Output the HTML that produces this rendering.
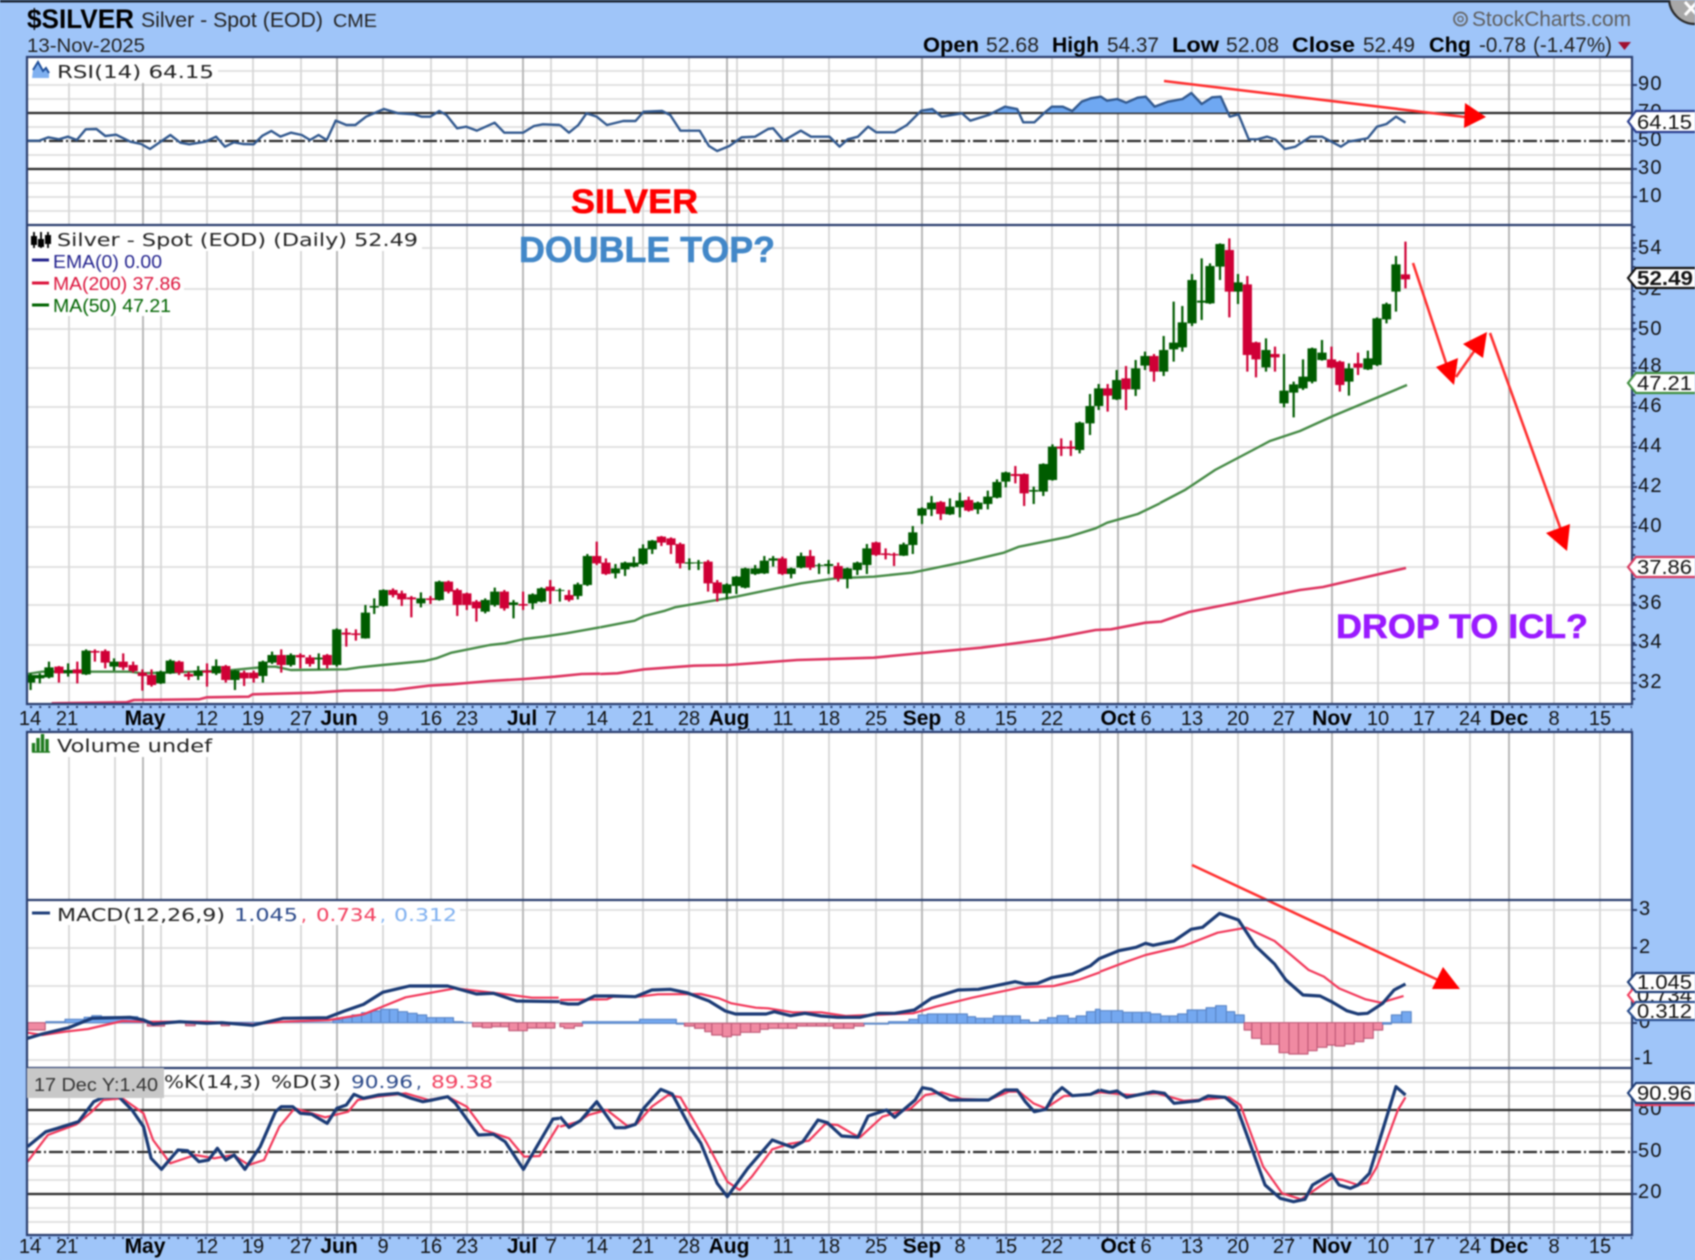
<!DOCTYPE html>
<html><head><meta charset="utf-8"><title>$SILVER</title>
<style>
html,body{margin:0;padding:0;background:#9fc5f9;width:1695px;height:1260px;overflow:hidden}
svg{display:block;filter:blur(.85px)}
text{font-family:"Liberation Sans",sans-serif;fill:#111}
.b{font-weight:bold;fill:#000}
.dv{font-family:"DejaVu Sans","Liberation Sans",sans-serif;font-size:18px;fill:#222}
.ctr text{text-anchor:middle;font-size:20px;fill:#111}
.ctr .m{font-weight:bold;fill:#000;font-size:21px}
.yl text{font-size:20px;letter-spacing:1.2px;fill:#111}
.z path,.z polygon{vector-effect:non-scaling-stroke;stroke-linejoin:round}
.w{fill:none;stroke-width:2.2}
.bd{fill:none;stroke-width:9.2}
.g{stroke:#005c00}.r{stroke:#cf0036}
.n{fill:none;stroke:#1a3a75;stroke-width:3.2}
.s{fill:none;stroke:#f2385a;stroke-width:2.2}
.rsi{fill:none;stroke:#32598f;stroke-width:2.4}
.m50{fill:none;stroke:#458a45;stroke-width:2.4}
.m200{fill:none;stroke:#dd3460;stroke-width:2.6}
.hb{fill:#74a8f0;stroke:#5a86c8;stroke-width:1.2}
.hp{fill:#f08aa2;stroke:#c05a78;stroke-width:1.2}
.hbl{fill:none;stroke:#5a86c8;stroke-width:1.2}
.hpl{fill:none;stroke:#c05a78;stroke-width:1.2}
.ar{fill:none;stroke:#ff3030;stroke-width:2.6}
.tt{fill:#ff0000}
.tg{fill:#fff;stroke-width:2.2}
.tl{font-size:20px;fill:#111}
</style></head>
<body>
<svg width="1695" height="1260" viewBox="0 0 1695 1260" xmlns="http://www.w3.org/2000/svg">
<rect width="1695" height="1260" fill="#9fc5f9"/>
<rect width="1695" height="2.5" fill="#1a2433"/>
<!-- panels -->
<rect x="27" y="57" width="1605" height="647" fill="#fff"/>
<rect x="27" y="732" width="1605" height="503" fill="#fff"/>
<!-- horizontal grid -->
<path fill="none" stroke="#dedede" stroke-width="1.8" d="M27 71H1632M27 85H1632M27 99H1632M27 127H1632M27 155H1632M27 183H1632M27 197H1632M27 211H1632
M27 248H1632M27 289H1632M27 329H1632M27 368H1632M27 407H1632M27 447H1632M27 487H1632M27 527H1632M27 567H1632M27 605H1632M27 645H1632M27 683H1632
M27 910H1632M27 948H1632M27 986H1632M27 1023H1632M27 1060H1632
M27 1082H1632M27 1096H1632M27 1124H1632M27 1138H1632M27 1166H1632M27 1180H1632M27 1208H1632M27 1222H1632"/>
<!-- vertical grid -->
<path fill="none" stroke="#d6d6d6" stroke-width="1.8" d="M69 57V704M115 57V704M161 57V704M207 57V704M253 57V704M301 57V704M383 57V704M431 57V704M467 57V704M551 57V704M597 57V704M643 57V704M689 57V704M737 57V704M783 57V704M829 57V704M876 57V704M960 57V704M1006 57V704M1052 57V704M1100 57V704M1146 57V704M1192 57V704M1238 57V704M1284 57V704M1378 57V704M1424 57V704M1470 57V704M1554 57V704M1600 57V704
M69 732V1235M115 732V1235M161 732V1235M207 732V1235M253 732V1235M301 732V1235M383 732V1235M431 732V1235M467 732V1235M551 732V1235M597 732V1235M643 732V1235M689 732V1235M737 732V1235M783 732V1235M829 732V1235M876 732V1235M960 732V1235M1006 732V1235M1052 732V1235M1100 732V1235M1146 732V1235M1192 732V1235M1238 732V1235M1284 732V1235M1378 732V1235M1424 732V1235M1470 732V1235M1554 732V1235M1600 732V1235"/>
<path fill="none" stroke="#b8b8b8" stroke-width="2" d="M143 57V704M337 57V704M523 57V704M727 57V704M922 57V704M1118 57V704M1332 57V704M1509 57V704
M143 732V1235M337 732V1235M523 732V1235M727 732V1235M922 732V1235M1118 732V1235M1332 732V1235M1509 732V1235"/>
<!-- legend backgrounds -->
<rect x="28" y="58" width="190" height="25" fill="#fff"/>
<rect x="28" y="226" width="394" height="25" fill="#fff"/>
<rect x="28" y="251" width="156" height="65" fill="#fff"/>
<rect x="28" y="733" width="188" height="24" fill="#fff"/>
<rect x="28" y="901" width="432" height="24" fill="#fff"/>
<rect x="164" y="1069" width="332" height="24" fill="#fff"/>
<!-- reference lines -->
<path fill="none" stroke="#2a2a2a" stroke-width="2.2" d="M27 113H1632M27 169H1632M27 1110H1632M27 1194H1632"/>
<path fill="none" stroke="#2a2a2a" stroke-width="2.2" stroke-dasharray="14 3 2 3" d="M27 141H1632M27 1152H1632"/>

<!-- RSI fill + line -->
<g class="z" transform="translate(560,60) scale(.40816,.33333)">
<path fill="#6fa8f2" d="M1190 158L1205 140 1232 140 1255 153 1278 125 1300 115 1325 110 1340 122 1365 117 1387 128 1415 113 1435 110 1457 140 1490 125 1525 117 1548 98V158ZM885 158L912 147 925 158ZM1070 158L1090 140 1120 147 1125 158Z"/>
<path class="rsi" d="M0 195L22 218 45 195 65 160 90 170 115 195 155 183 185 183 205 155 250 153 270 165 295 212 342 212 365 258 385 273 415 258 445 232 478 230 510 207 522 205 548 242 590 212 615 230 660 230 685 260 705 238 730 230 755 200 775 217 820 217 850 195 885 152 912 147 935 170 985 160 1005 182 1050 165 1090 140 1120 147 1135 187 1162 187 1190 155 1205 140 1232 140 1255 153 1278 125 1300 115 1325 110 1340 122 1365 117 1387 128 1415 113 1435 110 1457 140 1490 125 1525 117 1548 98"/>
</g>
<g class="z" transform="translate(0,0) scale(.35714,.33333)">
<path class="rsi" d="M75 422L110 422 135 412 165 418 190 410 215 420 240 388 270 387 295 408 325 404 365 425 395 432 420 447 450 425 477 405 505 428 530 433 575 425 605 410 630 440 655 427 680 432 710 433 735 407 760 393 785 410 815 398 845 405 868 420 892 405 915 420 940 362 970 375 995 375 1025 350 1075 327 1115 340 1160 343 1180 350 1205 350 1230 333 1250 345 1280 385 1305 380 1335 392 1385 368 1412 398 1465 398 1495 378 1520 373 1568 375"/>
</g>
<g class="z" transform="translate(1100,0) scale(.37946,.33333)">
<path fill="#6fa8f2" d="M240 278L268 312 295 292 318 290 335 338H240Z"/>
<path class="rsi" d="M240 278L268 312 295 292 318 290 342 350 365 343 392 418 415 418 440 410 462 418 487 447 515 440 555 410 585 410 635 440 655 425 705 415 730 380 755 372 780 350 805 368"/>
</g>

<!-- MAs -->
<g class="z" transform="translate(0,540) scale(.38265,.33333)">
<path class="m50" d="M72 402L110 395 340 395 370 400 590 392 700 380 720 380 760 390 905 388 940 382 1000 375 1110 363 1140 355 1180 338 1280 315 1320 310 1370 297 1420 290 1480 280 1568 262"/>
<path class="m200" d="M135 490L330 487 350 480 520 478 540 472 650 470 660 463 820 458 900 452 1030 450 1120 437 1180 433 1280 423 1370 417 1450 410 1520 402 1568 401"/>
</g>
<g class="z" transform="translate(560,400) scale(.38265,.33333)">
<path class="m50" d="M105 682L195 662 220 648 275 632 300 622 460 590 630 550 720 535 820 530 920 518 1060 485 1160 458 1200 440 1330 410 1400 385 1430 368 1510 342 1568 310"/>
<path class="m200" d="M105 822L150 820 220 808 350 797 440 795 620 780 820 773 920 762 1100 743 1270 718 1400 690 1440 688 1530 668 1568 665"/>
</g>
<path class="m50" d="M1160 503L1185 490 1215 470 1253 450 1270 441 1300 431 1333 416 1407 385"/>
<path class="m200" d="M1160 622L1189 612 1250 600 1300 590 1323 587 1406 568"/>

<!-- candles: left -->
<g class="z" transform="translate(0,540) scale(.38265,.33333)">
<path class="w g" d="M80 400V450M104 400V430M128 365V415M178 370V410M225 328V405M298 355V392M420 392V432M445 358V402M518 378V420M565 358V405M614 390V450M687 362V428M711 335V372M760 340V380M833 340V388M880 265V380M955 195V296M978 175V222M1002 148V200M1100 157V202M1148 122V182M1268 175V220M1293 143V200M1342 180V235M1392 160V208M1415 142V187M1463 145V185M1510 128V178M1535 42V138"/>
<path class="w r" d="M154 378V428M202 365V430M248 328V365M275 328V385M322 340V390M348 365V398M372 388V452M396 388V440M468 362V405M493 395V420M541 370V440M590 375V428M638 392V438M663 392V428M735 328V398M785 340V385M810 345V380M855 342V385M905 265V320M930 268V302M1027 145V172M1050 152V198M1075 168V232M1125 168V192M1172 122V160M1195 145V228M1220 158V210M1245 180V245M1318 150V212M1367 155V210M1438 120V192M1487 150V185"/>
<path class="bd g" d="M80 405V428M104 405V415M128 382V412M178 390V400M225 332V403M298 365V380M420 395V430M445 362V400M518 392V408M565 378V400M614 392V420M687 365V408M711 345V368M760 345V375M833 353V358M880 268V375M955 218V295M978 198V203M1002 150V198M1100 175V190M1148 125V180M1268 180V215M1293 155V195M1342 187V195M1392 163V190M1415 145V185M1463 150V153M1510 133V168M1535 48V135"/>
<path class="bd r" d="M154 380V400M202 388V400M248 333V338M275 333V368M322 365V382M348 375V393M372 398V408M396 405V435M468 365V398M493 402V410M541 392V398M590 378V420M638 398V415M663 398V415M735 345V375M785 345V352M810 352V372M855 345V375M905 278V284M930 280V285M1027 150V165M1050 160V178M1075 172V178M1125 175V180M1172 125V155M1195 150V195M1220 160V195M1245 185V205M1318 155V205M1367 192V197M1438 140V153M1487 165V180"/>
</g>
<!-- candles: middle -->
<g class="z" transform="translate(560,400) scale(.38265,.33333)">
<path class="w g" d="M145 492V535M170 485V528M193 470V502M217 433V495M241 420V462M338 475V510M362 480V510M436 550V598M461 528V582M484 503V565M510 495V525M534 468V522M557 468V500M604 503V535M630 458V505M677 490V522M702 480V522M751 503V565M777 485V525M802 432V522M898 428V468M922 378V462M946 322V372M971 288V348M1019 295V345M1045 278V352M1092 305V342M1118 272V328M1142 238V295M1165 215V262M1238 260V312M1263 190V288M1287 133V242M1358 65V160"/>
<path class="w r" d="M96 425V495M120 475V525M265 408V438M290 412V462M314 428V505M387 480V575M411 540V605M581 470V525M654 450V510M727 488V545M826 425V468M851 445V478M873 458V498M995 303V360M1068 290V335M1190 198V250M1213 220V318M1310 115V168M1335 122V168"/>
<path class="bd g" d="M145 505V520M170 488V508M193 488V500M217 445V492M241 422V448M338 487V491M362 487V490M436 553V580M461 530V558M484 505V563M510 505V522M534 482V520M557 475V482M604 505V522M630 468V503M677 495V498M702 492V498M751 505V537M777 488V510M802 445V495M898 433V467M922 397V435M946 325V347M971 308V328M1019 320V343M1045 302V322M1092 308V328M1118 290V312M1142 246V293M1165 217V245M1238 270V275M1263 192V275M1287 140V240M1358 68V150"/>
<path class="bd r" d="M96 468V490M120 488V522M265 410V428M290 415V435M314 432V490M387 485V550M411 547V580M581 475V522M654 468V503M727 498V535M826 427V465M851 460V465M873 462V466M995 306V342M1068 300V332M1190 222V228M1213 222V280M1310 140V146M1335 140V146"/>
</g>
<!-- candles: right 1 -->
<g class="z" transform="translate(1000,230) scale(.33333,.33333)">
<path class="w g" d="M270 492V615M296 462V540M350 420V510M407 390V498M435 365V420M491 318V438M521 215V395M547 228V365M576 132V288M605 85V270M630 100V222M660 40V150M714 132V222M798 325V425M852 372V532M881 455V562"/>
<path class="w r" d="M323 462V545M378 408V540M462 372V455M688 25V262M742 138V425M768 335V442M825 350V425"/>
<path class="bd g" d="M270 528V580M296 475V528M350 450V508M407 415V478M435 378V407M491 360V425M521 338V358M547 277V352M576 150V280M605 212V218M630 108V220M660 42V110M714 157V185M798 360V412M852 482V520M881 463V488"/>
<path class="bd r" d="M323 475V497M378 445V478M462 378V425M688 60V185M742 163V375M768 337V388M825 372V382"/>
</g>
<!-- candles: right 2 -->
<g class="z" transform="translate(1100,0) scale(.37946,.33333)">
<path class="w g" d="M535 1078V1170M559 1043V1150M585 1020V1082M656 1090V1187M706 1052V1110M730 952V1098M755 908V970M780 768V935"/>
<path class="w r" d="M610 1040V1105M632 1082V1175M680 1058V1125M805 725V865"/>
<path class="bd g" d="M535 1130V1165M559 1045V1145M585 1058V1080M656 1105V1145M706 1075V1108M730 955V1095M755 912V958M780 793V875"/>
<path class="bd r" d="M610 1078V1103M632 1085V1155M680 1090V1103M805 823V838"/>
</g>

<!-- histogram + MACD -->
<g class="z" transform="translate(0,880) scale(.38265,.33333)">
<path class="hp" d="M72 428V450H118V428Z"/>
<path class="hb" d="M120 428V425H170V418H220V412H240V407H265V410H360V425H385V428Z"/>
<path class="hp" d="M385 428V438H430V428ZM485 428V437H510V428ZM578 428V437H600V428Z"/>
<path class="hb" d="M870 428V420H895V412H920V405H945V398H970V393H995V388H1040V395H1065V400H1090V405H1115V413H1185V425H1210V428Z"/>
<path class="hbl" d="M895 428V412M920 428V405M945 428V398M970 428V393M995 428V388M1018 428V388M1040 428V395M1065 428V400M1090 428V405M1115 428V413M1140 428V413M1162 428V413M600 427H870M1210 428H1235"/>
<path class="hp" d="M1235 428V440H1260V443H1285V440H1330V452H1378V444H1450V428Z"/>
<path class="hpl" d="M1260 428V443M1285 428V440M1308 428V440M1330 428V452M1354 428V452M1378 428V444M1402 428V444M1426 428V444"/>
<path class="s" d="M72 458L110 465 170 455 230 447 320 423 380 425 540 425 660 433 740 425 860 420 950 403 1060 352 1190 325 1280 337 1390 353 1460 353"/>
<path class="n" d="M72 475L110 462 180 443 240 415 340 412 375 420 400 432 470 425 540 430 580 428 660 436 740 415 855 413 900 393 950 373 1000 337 1070 318 1170 318 1245 342 1290 340 1350 363 1463 365"/>
</g>
<g class="z" transform="translate(560,900) scale(.40816,.33333)">
<path class="hp" d="M0 370V380H10V385H35V378H55V370Z"/>
<path class="hb" d="M55 370V365H195V358H285V372H305V370Z"/>
<path class="hp" d="M305 370V378H330V385H355V395H372V405H398V410H420V405H442V397H490V388H510V385H580V378H670V385H720V378H745V370Z"/>
<path class="hpl" d="M330 370V385M355 370V395M372 370V405M398 370V410M420 370V405M442 370V397M467 370V397M490 370V388M510 370V385M535 370V385M558 370V385M580 370V378M605 370V378M628 370V378M650 370V378M670 370V385M695 370V385M720 370V378"/>
<path class="hb" d="M745 370V372H805V365H855V358H878V345H900V342H998V350H1018V355H1062V348H1128V360H1150V367H1175V360H1195V353H1218V347H1245V355H1265V348H1290V335H1312V328H1323V370Z"/>
<path class="hbl" d="M878 370V345M900 370V342M925 370V342M948 370V342M972 370V342M998 370V350M1018 370V355M1040 370V355M1062 370V348M1085 370V348M1108 370V348M1128 370V360M1195 370V353M1218 370V347M1245 370V355M1265 370V348M1290 370V335M1312 370V328"/>
<path class="s" d="M0 300L115 298 130 290 190 290 240 283 345 282 390 295 420 310 480 323 510 325 570 337 640 337 700 348 760 345 865 340 920 320 1010 293 1130 262 1210 258 1270 240 1323 217"/>
<path class="n" d="M0 308L20 312 45 312 85 288 130 288 185 290 225 270 270 268 310 278 365 303 405 333 430 342 505 342 525 335 565 347 600 340 640 348 680 352 735 352 780 340 820 340 868 330 910 295 975 270 1025 268 1115 245 1140 252 1170 250 1205 233 1255 222 1300 197 1323 174"/>
</g>
<g class="z" transform="translate(1100,860) scale(.37946,.33333)">
<path class="hb" d="M0 488V452H60V457H133V462H160V468H205V462H230V450H280V443H305V437H333V455H355V465H380V488Z"/>
<path class="hbl" d="M30 488V452M60 488V457M85 488V457M110 488V457M133 488V462M160 488V468M183 488V468M205 488V462M230 488V450M256 488V450M280 488V443M305 488V437M333 488V455M355 488V465"/>
<path class="hp" d="M380 488V510H400V535H425V553H472V578H498V582H548V572H572V562H598V555H620V558H645V552H670V545H695V535H720V510H745V488Z"/>
<path class="hpl" d="M400 488V535M425 488V553M449 488V553M472 488V578M498 488V582M523 488V582M548 488V572M572 488V562M598 488V555M620 488V558M645 488V552M670 488V545M695 488V535M720 488V510"/>
<path class="hb" d="M745 488V492H768V465H795V455H820V488Z"/>
<path class="hbl" d="M795 488V455"/>
<path class="s" d="M0 335L70 305 120 285 220 258 310 218 385 203 460 243 550 330 590 350 630 385 700 418 740 428 800 408"/>
<path class="n" d="M0 295L50 272 95 262 120 250 140 256 195 243 240 208 270 202 315 160 365 180 410 258 460 312 490 360 535 405 580 408 610 425 650 452 680 462 705 460 745 430 775 390 805 372"/>
</g>

<!-- Stochastics -->
<g class="z" transform="translate(0,880) scale(.38265,.33333)">
<path class="s" d="M72 845L125 765 200 733 240 695 270 660 320 655 375 700 400 780 445 850 510 825 560 835 610 825 650 855 690 840 730 740 770 685 850 712 910 695 935 660 985 650 1060 640 1120 660 1170 650 1220 680 1265 750 1330 775 1370 830 1410 828 1460 735"/>
<path class="n" d="M72 800L120 755 150 745 205 725 245 665 270 652 310 650 345 690 375 740 395 835 422 868 465 810 490 812 520 845 545 840 568 805 590 840 612 825 640 868 680 800 720 695 735 680 765 680 785 700 815 703 855 730 880 685 905 675 925 643 950 655 990 645 1040 640 1075 655 1105 665 1130 660 1170 650 1190 670 1250 765 1290 763 1320 785 1368 868 1445 717 1462 715"/>
</g>
<g class="z" transform="translate(560,900) scale(.40816,.33333)">
<path class="s" d="M0 680L45 665 70 645 115 630 165 678 190 670 225 620 265 585 295 592 360 730 410 845 440 870 470 830 520 748 560 732 610 722 650 672 680 675 715 700 735 712 790 650 860 625 895 585 935 577 985 597 1050 600 1100 575 1125 575 1160 610 1190 625 1235 588 1290 585 1323 577"/>
<path class="n" d="M0 650L22 682 50 662 90 605 135 683 160 683 185 673 205 625 247 568 275 582 320 685 345 730 385 850 410 890 460 805 520 720 570 742 595 725 632 660 655 668 690 708 730 712 755 648 800 630 820 652 870 600 888 563 910 568 955 600 1050 600 1090 570 1120 570 1140 605 1162 635 1190 628 1210 585 1230 563 1255 587 1300 583 1322 570"/>
</g>
<g class="z" transform="translate(1100,860) scale(.37946,.33333)">
<path class="s" d="M0 697L80 705 150 700 220 722 280 718 340 712 370 735 430 920 480 1000 530 1018 610 955 640 960 680 975 705 968 730 920 785 750 805 712"/>
<path class="n" d="M0 690L25 697 45 693 70 712 140 695 170 700 195 730 260 722 285 708 330 712 360 740 435 975 475 1015 510 1025 540 1018 560 975 610 942 630 975 660 985 680 975 710 940 780 680 805 705"/>
</g>

<!-- annotation arrows -->
<path class="ar" d="M1164 81L1465 117M1413 263L1450 375M1456 377L1475 350M1490 333L1561 530M1192 865L1438 980"/>
<polygon class="tt" points="1486,117 1465,103 1464,128"/>
<polygon class="tt" points="1436,367 1458,358 1454,385"/>
<polygon class="tt" points="1487,332 1463,344 1483,358"/>
<polygon class="tt" points="1546,533 1570,524 1567,551"/>
<polygon class="tt" points="1443,967 1432,989 1460,989"/>
<text x="571" y="213" font-size="34" font-weight="bold" style="fill:#ff0000;stroke:#ff0000;stroke-width:.6" textLength="127" lengthAdjust="spacingAndGlyphs">SILVER</text>
<text x="519" y="262" font-size="36" font-weight="bold" style="fill:#4287c8;stroke:#4287c8;stroke-width:.6" textLength="256" lengthAdjust="spacingAndGlyphs">DOUBLE TOP?</text>
<text x="1336" y="638" font-size="34" font-weight="bold" style="fill:#9a1aff;stroke:#9a1aff;stroke-width:.6" textLength="252" lengthAdjust="spacingAndGlyphs">DROP TO ICL?</text>

<!-- panel borders -->
<path fill="none" stroke="#2b3f6f" stroke-width="2.2" d="M27 57H1632V704H27ZM27 732H1632V1235H27ZM27 225H1632M27 900H1632M27 1068H1632"/>
<!-- ticks -->
<path fill="none" stroke="#2b3f6f" stroke-width="2" stroke-dasharray="2 7.2" d="M30 707H1632M30 729.5H1632M30 1238H1632"/>
<path fill="none" stroke="#2b3f6f" stroke-width="2.4" stroke-dasharray="2 6" d="M1634 226V704"/>
<path fill="none" stroke="#2b3f6f" stroke-width="2" d="M1632 85h5M1632 141h5M1632 169h5M1632 197h5M1632 248h5M1632 329h5M1632 368h5M1632 407h5M1632 447h5M1632 487h5M1632 527h5M1632 605h5M1632 645h5M1632 683h5M1632 910h5M1632 948h5M1632 1023h5M1632 1152h5M1632 1194h5"/>

<!-- Right axis labels -->
<g class="yl">
<text x="1638" y="90">90</text><text x="1638" y="118">70</text><text x="1638" y="146">50</text><text x="1638" y="174">30</text><text x="1638" y="202">10</text>
<text x="1638" y="254">54</text><text x="1638" y="295">52</text><text x="1638" y="335">50</text><text x="1638" y="372">48</text><text x="1638" y="412">46</text><text x="1638" y="452">44</text><text x="1638" y="492">42</text><text x="1638" y="532">40</text><text x="1638" y="572">38</text><text x="1638" y="609">36</text><text x="1638" y="648">34</text><text x="1638" y="688">32</text>
<text x="1639" y="915">3</text><text x="1639" y="953">2</text><text x="1639" y="992">1</text><text x="1639" y="1028">0</text><text x="1634" y="1064">-1</text>
<text x="1638" y="1115">80</text><text x="1638" y="1157">50</text><text x="1638" y="1198">20</text>
</g>
<!-- Value tags -->
<polygon class="tg" stroke="#2b3f8f" points="1628,121.5 1636,111 1697,111 1697,132 1636,132"/>
<text class="tl" x="1637" y="129" textLength="55" lengthAdjust="spacingAndGlyphs">64.15</text>
<polygon class="tg" stroke="#111" points="1628,278 1636,268 1697,268 1697,288 1636,288"/>
<text class="tl b" x="1637" y="285" font-weight="bold" textLength="56" lengthAdjust="spacingAndGlyphs">52.49</text>
<polygon class="tg" stroke="#3f8f3f" points="1628,383 1636,373 1697,373 1697,393 1636,393"/>
<text class="tl" x="1637" y="390" textLength="55" lengthAdjust="spacingAndGlyphs">47.21</text>
<polygon class="tg" stroke="#d83a60" points="1628,567 1636,557 1697,557 1697,577 1636,577"/>
<text class="tl" x="1637" y="574" textLength="55" lengthAdjust="spacingAndGlyphs">37.86</text>
<polygon class="tg" stroke="#f2405f" points="1628,995 1636,985 1697,985 1697,1005 1636,1005"/>
<text class="tl" x="1637" y="1002" textLength="55" lengthAdjust="spacingAndGlyphs">0.734</text>
<polygon class="tg" stroke="#2b4f8f" points="1628,1011 1636,1002 1697,1002 1697,1020 1636,1020"/>
<text class="tl" x="1637" y="1018" textLength="55" lengthAdjust="spacingAndGlyphs">0.312</text>
<polygon class="tg" stroke="#1f3f7a" points="1628,982 1636,973 1697,973 1697,992 1636,992"/>
<text class="tl" x="1637" y="989" textLength="55" lengthAdjust="spacingAndGlyphs">1.045</text>
<polygon class="tg" stroke="#f2405f" points="1636,1092 1697,1092 1697,1105 1636,1105"/>
<polygon class="tg" stroke="#1f3f7a" points="1628,1093 1636,1083 1697,1083 1697,1103 1636,1103"/>
<text class="tl" x="1637" y="1100" textLength="55" lengthAdjust="spacingAndGlyphs">90.96</text>

<!-- X axis labels -->
<g class="ctr" transform="translate(0,725)">
<text x="30">14</text><text x="67">21</text><text class="m" x="145">May</text><text x="207">12</text><text x="253">19</text><text x="301">27</text><text class="m" x="339">Jun</text><text x="383">9</text><text x="431">16</text><text x="467">23</text><text class="m" x="522">Jul</text><text x="551">7</text><text x="597">14</text><text x="643">21</text><text x="689">28</text><text class="m" x="729">Aug</text><text x="783">11</text><text x="829">18</text><text x="876">25</text><text class="m" x="922">Sep</text><text x="960">8</text><text x="1006">15</text><text x="1052">22</text><text class="m" x="1118">Oct</text><text x="1146">6</text><text x="1192">13</text><text x="1238">20</text><text x="1284">27</text><text class="m" x="1332">Nov</text><text x="1378">10</text><text x="1424">17</text><text x="1470">24</text><text class="m" x="1509">Dec</text><text x="1554">8</text><text x="1600">15</text>
</g>
<g class="ctr" transform="translate(0,1253)">
<text x="30">14</text><text x="67">21</text><text class="m" x="145">May</text><text x="207">12</text><text x="253">19</text><text x="301">27</text><text class="m" x="339">Jun</text><text x="383">9</text><text x="431">16</text><text x="467">23</text><text class="m" x="522">Jul</text><text x="551">7</text><text x="597">14</text><text x="643">21</text><text x="689">28</text><text class="m" x="729">Aug</text><text x="783">11</text><text x="829">18</text><text x="876">25</text><text class="m" x="922">Sep</text><text x="960">8</text><text x="1006">15</text><text x="1052">22</text><text class="m" x="1118">Oct</text><text x="1146">6</text><text x="1192">13</text><text x="1238">20</text><text x="1284">27</text><text class="m" x="1332">Nov</text><text x="1378">10</text><text x="1424">17</text><text x="1470">24</text><text class="m" x="1509">Dec</text><text x="1554">8</text><text x="1600">15</text>
</g>

<!-- Header -->
<text class="b" x="27" y="28" font-size="27" textLength="107" lengthAdjust="spacingAndGlyphs">$SILVER</text>
<text x="141" y="27" font-size="21" style="fill:#222" textLength="182" lengthAdjust="spacingAndGlyphs">Silver - Spot (EOD)</text>
<text x="333" y="27" font-size="18" style="fill:#222" textLength="44" lengthAdjust="spacingAndGlyphs">CME</text>
<text x="27" y="52" font-size="19" style="fill:#222" textLength="118" lengthAdjust="spacingAndGlyphs">13-Nov-2025</text>
<circle cx="1460.5" cy="19" r="6.5" fill="none" stroke="#666" stroke-width="1.8"/>
<circle cx="1460.5" cy="19" r="2.6" fill="none" stroke="#666" stroke-width="1.4"/>
<text x="1472" y="26" font-size="21" style="fill:#5e5e5e" textLength="159" lengthAdjust="spacingAndGlyphs">StockCharts.com</text>
<g font-size="21">
<text class="b" x="923" y="52" textLength="56" lengthAdjust="spacingAndGlyphs">Open</text>
<text x="986" y="52" style="fill:#222" textLength="53" lengthAdjust="spacingAndGlyphs">52.68</text>
<text class="b" x="1052" y="52" textLength="47" lengthAdjust="spacingAndGlyphs">High</text>
<text x="1107" y="52" style="fill:#222" textLength="52" lengthAdjust="spacingAndGlyphs">54.37</text>
<text class="b" x="1172" y="52" textLength="47" lengthAdjust="spacingAndGlyphs">Low</text>
<text x="1226" y="52" style="fill:#222" textLength="53" lengthAdjust="spacingAndGlyphs">52.08</text>
<text class="b" x="1292" y="52" textLength="63" lengthAdjust="spacingAndGlyphs">Close</text>
<text x="1363" y="52" style="fill:#222" textLength="52" lengthAdjust="spacingAndGlyphs">52.49</text>
<text class="b" x="1429" y="52" textLength="42" lengthAdjust="spacingAndGlyphs">Chg</text>
<text x="1479" y="52" style="fill:#222" textLength="47" lengthAdjust="spacingAndGlyphs">-0.78</text>
<text x="1533" y="52" style="fill:#222" textLength="79" lengthAdjust="spacingAndGlyphs">(-1.47%)</text>
</g>
<polygon points="1618,42 1631,42 1624.5,50" fill="#a01030"/>
<!-- close button -->
<circle cx="1695" cy="-2" r="26" fill="#a8a8a8" stroke="#2a2a2a" stroke-width="2.2"/>
<path d="M1685 2L1697 15M1697 2L1685 15" stroke="#fff" stroke-width="3" fill="none"/>

<!-- Legends -->
<path d="M32 78L33 70 38 62 43 71 46 68 49 73V78Z" fill="#7fb0f0"/>
<path d="M33 70L38 62 43 71 46 68 49 73" stroke="#1f4f9a" stroke-width="2" fill="none"/>
<path d="M34 232V248M41 232V248M48 232V248" stroke="#000" stroke-width="1.8" fill="none"/>
<path d="M34 236V245M41 239V247M48 235V244" stroke="#000" stroke-width="6" fill="none"/>
<text class="dv" x="57" y="78" textLength="157" lengthAdjust="spacingAndGlyphs">RSI(14) 64.15</text>
<text class="dv" x="57" y="246" textLength="361" lengthAdjust="spacingAndGlyphs">Silver - Spot (EOD) (Daily) 52.49</text>
<path d="M32 260H49" stroke="#23238e" stroke-width="3"/>
<text x="53" y="268" font-size="18" style="fill:#23238e" textLength="109" lengthAdjust="spacingAndGlyphs">EMA(0) 0.00</text>
<path d="M32 283H49" stroke="#dc143c" stroke-width="3"/>
<text x="53" y="290" font-size="18" style="fill:#dc143c" textLength="128" lengthAdjust="spacingAndGlyphs">MA(200) 37.86</text>
<path d="M32 305H49" stroke="#006400" stroke-width="3"/>
<text x="53" y="312" font-size="18" style="fill:#006400" textLength="118" lengthAdjust="spacingAndGlyphs">MA(50) 47.21</text>
<path d="M33.5 752V743M38 752V738M42.5 752V734M47 752V739" stroke="#1e7a1e" stroke-width="3.4" fill="none"/>
<path d="M32 752H50" stroke="#1e7a1e" stroke-width="1.5"/>
<text class="dv" x="57" y="752" textLength="155" lengthAdjust="spacingAndGlyphs">Volume undef</text>
<path d="M32 913H50" stroke="#1f3f7a" stroke-width="3"/>
<text class="dv" x="57" y="921" textLength="168" lengthAdjust="spacingAndGlyphs">MACD(12,26,9)</text>
<text class="dv" x="234" y="921" style="fill:#2c4a8a" textLength="64" lengthAdjust="spacingAndGlyphs">1.045</text>
<text class="dv" x="301" y="921" style="fill:#f2405f">,</text>
<text class="dv" x="316" y="921" style="fill:#f2405f" textLength="61" lengthAdjust="spacingAndGlyphs">0.734</text>
<text class="dv" x="380" y="921" style="fill:#7fb0f0">,</text>
<text class="dv" x="394" y="921" style="fill:#7fb0f0" textLength="63" lengthAdjust="spacingAndGlyphs">0.312</text>
<rect x="27" y="1068" width="137" height="30" fill="#c8c8c8"/>
<text x="34" y="1091" font-size="18" style="fill:#333" textLength="124" lengthAdjust="spacingAndGlyphs">17 Dec Y:1.40</text>
<text class="dv" x="164" y="1088" textLength="97" lengthAdjust="spacingAndGlyphs">%K(14,3)</text>
<text class="dv" x="271" y="1088" textLength="70" lengthAdjust="spacingAndGlyphs">%D(3)</text>
<text class="dv" x="351" y="1088" style="fill:#2c4a8a" textLength="62" lengthAdjust="spacingAndGlyphs">90.96</text>
<text class="dv" x="416" y="1088" style="fill:#2c4a8a">,</text>
<text class="dv" x="431" y="1088" style="fill:#f2405f" textLength="62" lengthAdjust="spacingAndGlyphs">89.38</text>
</svg>
</body></html>
